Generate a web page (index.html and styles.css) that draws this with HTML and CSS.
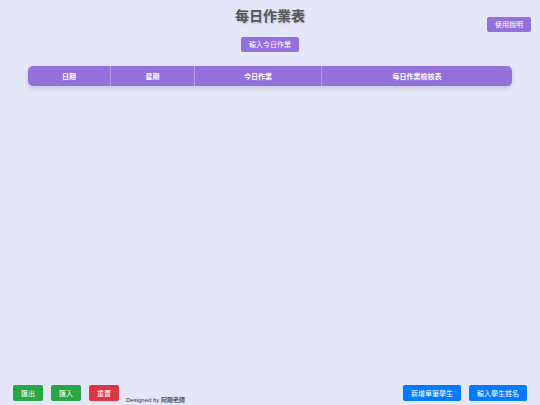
FILE: index.html
```html
<!DOCTYPE html>
<html lang="zh-Hant">
<head>
  <meta charset="UTF-8">
  <meta name="viewport" content="width=device-width, initial-scale=1.0">
  <title>每日作業表</title>
  <link rel="stylesheet" href="styles.css">
</head>
<body>
  <div class="page">
    <!-- Header -->
    <header class="top">
      <h1>每日作業表</h1>
      <button class="btn btn-purple">輸入今日作業</button>
      <button class="btn btn-purple help-btn">使用說明</button>
    </header>

    <!-- Homework table -->
    <table class="hw-table">
      <colgroup>
        <col class="col-date">
        <col class="col-day">
        <col class="col-task">
        <col class="col-check">
      </colgroup>
      <thead>
        <tr>
          <th>日期</th>
          <th>星期</th>
          <th>今日作業</th>
          <th>每日作業檢核表</th>
        </tr>
      </thead>
      <tbody id="hw-body"></tbody>
    </table>

    <!-- Footer buttons -->
    <footer class="bottom">
      <div class="group">
        <button class="btn btn-green">匯出</button>
        <button class="btn btn-green">匯入</button>
        <button class="btn btn-red">重置</button>
        <span class="credit">Designed by <b>阿剛老師</b></span>
      </div>
      <div class="group">
        <button class="btn btn-blue">新增單筆學生</button>
        <button class="btn btn-blue">輸入學生姓名</button>
      </div>
    </footer>
  </div>
</body>
</html>
```

FILE: styles.css
```css
* {
  box-sizing: border-box;
}
html, body {
  margin: 0;
  height: 100%;
}
body {
  background: #e6e6fa;
  font-family: "Liberation Sans", "Noto Sans CJK TC", sans-serif;
  color: #333;
}
.page {
  display: flex;
  flex-direction: column;
  min-height: 100%;
  padding: 8px 28px 0;
}
.top {
  position: relative;
  display: flex;
  flex-direction: column;
  align-items: center;
}
.top h1 {
  margin: 0;
  font-size: 14px;
  line-height: 17px;
  color: #555;
  text-shadow: 1px 1px 2px rgba(0, 0, 0, 0.2);
}
.btn {
  border: none;
  border-radius: 2px;
  font-family: inherit;
  font-size: 7px;
  line-height: 9px;
  color: #fff;
  padding: 3px 8px;
  cursor: pointer;
}
.top .btn {
  margin-top: 12px;
  height: 15px;
}
.btn-purple {
  background: #9370db;
}
.help-btn {
  position: absolute;
  top: 9px;
  right: -19px;
  margin-top: 0 !important;
}
.hw-table {
  margin-top: 14px;
  width: 484px;
  border-collapse: separate;
  border-spacing: 0;
  border-radius: 5px;
  box-shadow: 0 2px 5px rgba(0, 0, 0, 0.15);
}
.col-date { width: 83px; }
.col-day { width: 84px; }
.col-task { width: 127px; }
.col-check { width: 190px; }
.hw-table th {
  background: #9370db;
  color: #fff;
  font-size: 7px;
  font-weight: bold;
  height: 20px;
  padding: 0;
  border-right: 1px solid rgba(255, 255, 255, 0.3);
}
.hw-table th:first-child {
  border-radius: 5px 0 0 5px;
}
.hw-table th:last-child {
  border-right: none;
  border-radius: 0 5px 5px 0;
}
.bottom {
  margin: auto -15px 0;
  display: flex;
  justify-content: space-between;
  align-items: flex-end;
  padding-bottom: 1px;
}
.group {
  display: flex;
  align-items: flex-end;
  gap: 8px;
}
.bottom .btn {
  height: 16px;
  margin-bottom: 3px;
}
.btn-green {
  background: #28a745;
}
.btn-red {
  background: #dc3545;
}
.btn-blue {
  background: #007bff;
}
.credit {
  margin-left: -1px;
  font-size: 6px;
  line-height: 7px;
  color: #333;
}
.credit b {
  color: #555;
}
```
